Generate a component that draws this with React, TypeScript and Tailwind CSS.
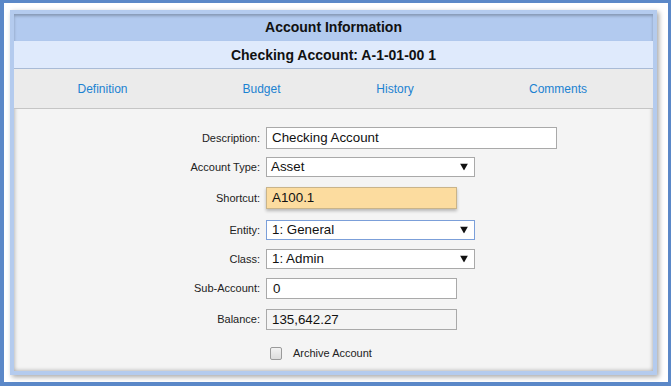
import React from "react";

const Arrow = () => (
  <svg width="8" height="7" viewBox="0 0 8 7" className="absolute right-[6px] top-1/2 -translate-y-1/2">
    <path d="M0 0 L8 0 L4 7 Z" fill="#111" />
  </svg>
);

function Row({ label, mt, h, children }: { label: string; mt: string; h: string; children: React.ReactNode }) {
  return (
    <div className={`flex items-center ${mt} ${h}`}>
      <div className="w-[246px] text-right text-[11px] text-[#222] pr-[0px]">{label}</div>
      <div className="ml-[6px] h-full">{children}</div>
    </div>
  );
}

export default function App() {
  return (
    <div className="w-[671px] h-[386px] bg-[#5b88c8] pt-[3px] pl-[4px] font-['Liberation_Sans',Arial,sans-serif] overflow-hidden">
      <div className="w-[664px] h-[379px] bg-white pt-[7px] pl-[6px]">
        <div className="w-[647px] h-[365px] border-4 border-[#b4cbee] shadow-[2px_2px_5px_rgba(0,0,0,0.35)] flex flex-col">
          <div className="relative flex-1 flex flex-col bg-[#f4f4f4] shadow-[inset_0_0_4px_rgba(0,0,0,0.35)]">
            <div className="h-[27px] bg-[#b2caef] flex items-center justify-center text-[14px] font-bold text-[#111] shadow-[inset_0_2px_3px_rgba(0,0,0,0.25)]">
              Account Information
            </div>
            <div className="h-[28px] bg-[#dfeafc] border-b border-[#a9bbd6] flex items-center justify-center text-[14px] font-bold text-[#111] pt-[2px]">
              Checking Account: A-1-01-00 1
            </div>
            <div className="h-[40px] bg-[#ebebeb] border-b border-[#c5c5c5] flex items-center text-[12px] text-[#1b82d1] pt-[1px]">
              <div className="w-[177px] shrink-0 text-center">Definition</div>
              <div className="w-[141px] shrink-0 text-center">Budget</div>
              <div className="w-[126px] shrink-0 text-center">History</div>
              <div className="w-[200px] shrink-0 text-center">Comments</div>
            </div>
            <div className="flex flex-col">
              <Row label="Description:" mt="mt-[18px]" h="h-[22px]">
                <div className="w-[291px] h-full border border-[#a9a9a9] bg-white pl-[5px] flex items-center text-[13.333px] text-[#111]">Checking Account</div>
              </Row>
              <Row label="Account Type:" mt="mt-[8px]" h="h-[20px]">
                <div className="relative w-[209px] h-full border border-[#a9a9a9] bg-white pl-[4px] flex items-center text-[13.333px] text-[#111]">Asset<Arrow /></div>
              </Row>
              <Row label="Shortcut:" mt="mt-[10px]" h="h-[22px]">
                <div className="w-[191px] h-full border border-[#c9b48a] bg-[#fcdc9f] pl-[5px] flex items-center text-[13.333px] text-[#111] shadow-[0_2px_3px_rgba(0,0,0,0.25)]">A100.1</div>
              </Row>
              <Row label="Entity:" mt="mt-[11px]" h="h-[20px]">
                <div className="relative w-[209px] h-full border border-[#7b9fd9] bg-white pl-[5px] flex items-center text-[13.333px] text-[#111]">1: General<Arrow /></div>
              </Row>
              <Row label="Class:" mt="mt-[9px]" h="h-[20px]">
                <div className="relative w-[209px] h-full border border-[#a9a9a9] bg-white pl-[5px] flex items-center text-[13.333px] text-[#111]">1: Admin<Arrow /></div>
              </Row>
              <Row label="Sub-Account:" mt="mt-[9px]" h="h-[21px]">
                <div className="w-[191px] h-full border border-[#a9a9a9] bg-white pl-[6px] flex items-center text-[13.333px] text-[#111]">0</div>
              </Row>
              <Row label="Balance:" mt="mt-[10px]" h="h-[21px]">
                <div className="w-[191px] h-full border border-[#a9a9a9] bg-[#f4f4f4] pl-[5px] flex items-center text-[13.333px] text-[#111]">135,642.27</div>
              </Row>
              <div className="flex items-center mt-[17px] h-[13px]">
                <div className="ml-[256px] w-[12px] h-[13px] rounded-[2px] border border-[#9a9a9a] bg-gradient-to-b from-[#f2f2f2] to-[#dcdcdc]" />
                <div className="ml-[11px] text-[11px] text-[#222]">Archive Account</div>
              </div>
            </div>
          </div>
        </div>
      </div>
    </div>
  );
}
